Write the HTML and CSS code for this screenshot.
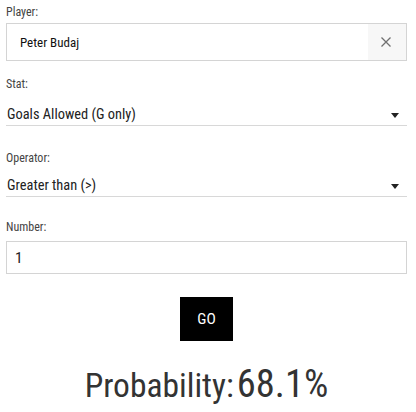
FILE: index.html
```html
<!DOCTYPE html>
<html>
<head>
<meta charset="utf-8">
<link rel="stylesheet" href="styles.css">
</head>
<body>
<div class="form">
  <div class="field field-player">
    <label class="label">Player:</label>
    <div class="combo">
      <span class="combo-value">Peter Budaj</span>
      <span class="clear">
        <svg width="10" height="10" viewBox="0 0 10 10"><path d="M0.5 0.5L9.5 9.5M9.5 0.5L0.5 9.5" stroke="#707070" stroke-width="1.3" fill="none"/></svg>
      </span>
    </div>
  </div>
  <div class="field field-stat">
    <label class="label">Stat:</label>
    <div class="select"><span>Goals Allowed (G only)</span><span class="caret"></span></div>
  </div>
  <div class="field field-operator">
    <label class="label">Operator:</label>
    <div class="select"><span>Greater than (&gt;)</span><span class="caret"></span></div>
  </div>
  <div class="field field-number">
    <label class="label">Number:</label>
    <div class="number">1</div>
  </div>
  <div class="actions"><button class="go">GO</button></div>
  <div class="result"><span class="res-label">Probability:</span><span class="res-value">68.1%</span></div>
</div>
</body>
</html>
```
FILE: styles.css
```css
body {
  margin: 0;
  background: #fff;
  font-family: "Roboto Condensed", Roboto, sans-serif;
  font-stretch: condensed;
  color: #222;
}
.form {
  padding: 5px 9px 0 6px;
  display: flex;
  flex-direction: column;
}
.label {
  display: block;
  font-size: 12px;
  line-height: 14px;
  color: #444;
}
.field-player .label { margin-bottom: 4px; }
.field-player { margin-bottom: 16px; }
.field-stat .label { margin-bottom: 14px; }
.field-stat { margin-bottom: 25px; }
.field-operator .label { margin-bottom: 11px; }
.field-operator { margin-bottom: 23px; }
.field-number .label { margin-bottom: 7px; }
.combo {
  height: 38px;
  border: 1px solid #d4d4d4;
  display: flex;
  align-items: center;
  box-sizing: border-box;
}
.combo-value {
  flex: 1;
  padding-left: 13px;
  font-size: 13px;
  color: #111;
}
.clear {
  width: 36px;
  align-self: stretch;
  background: #f7f7f7;
  display: flex;
  align-items: center;
  justify-content: center;
  padding-right: 2px;
}
.select {
  display: flex;
  align-items: center;
  justify-content: space-between;
  border-bottom: 1px solid #d8d8d8;
  height: 20px;
  line-height: 20px;
  padding: 0 8px 0 1px;
  font-size: 14.4px;
  color: #222;
}
.caret {
  width: 0; height: 0;
  border-left: 4px solid transparent;
  border-right: 4px solid transparent;
  border-top: 5px solid #222;
  margin-top: 1px;
}
.number {
  height: 33px;
  border: 1px solid #d4d4d4;
  box-sizing: border-box;
  display: flex;
  align-items: center;
  padding-left: 8px;
  font-size: 15.5px;
  color: #222;
}
.actions { display: flex; justify-content: center; margin-top: 23px; }
.go {
  background: #000;
  color: #fff;
  border: none;
  width: 53px;
  height: 44px;
  padding: 0;
  font-family: inherit;
  font-stretch: condensed;
  font-size: 15.5px;
}
.result {
  display: flex;
  justify-content: center;
  align-items: baseline;
  gap: 3px;
  margin-top: 23px;
  line-height: 40px;
  color: #333;
}
.res-label { font-size: 33.5px; }
.res-value { font-size: 38.5px; }
```
